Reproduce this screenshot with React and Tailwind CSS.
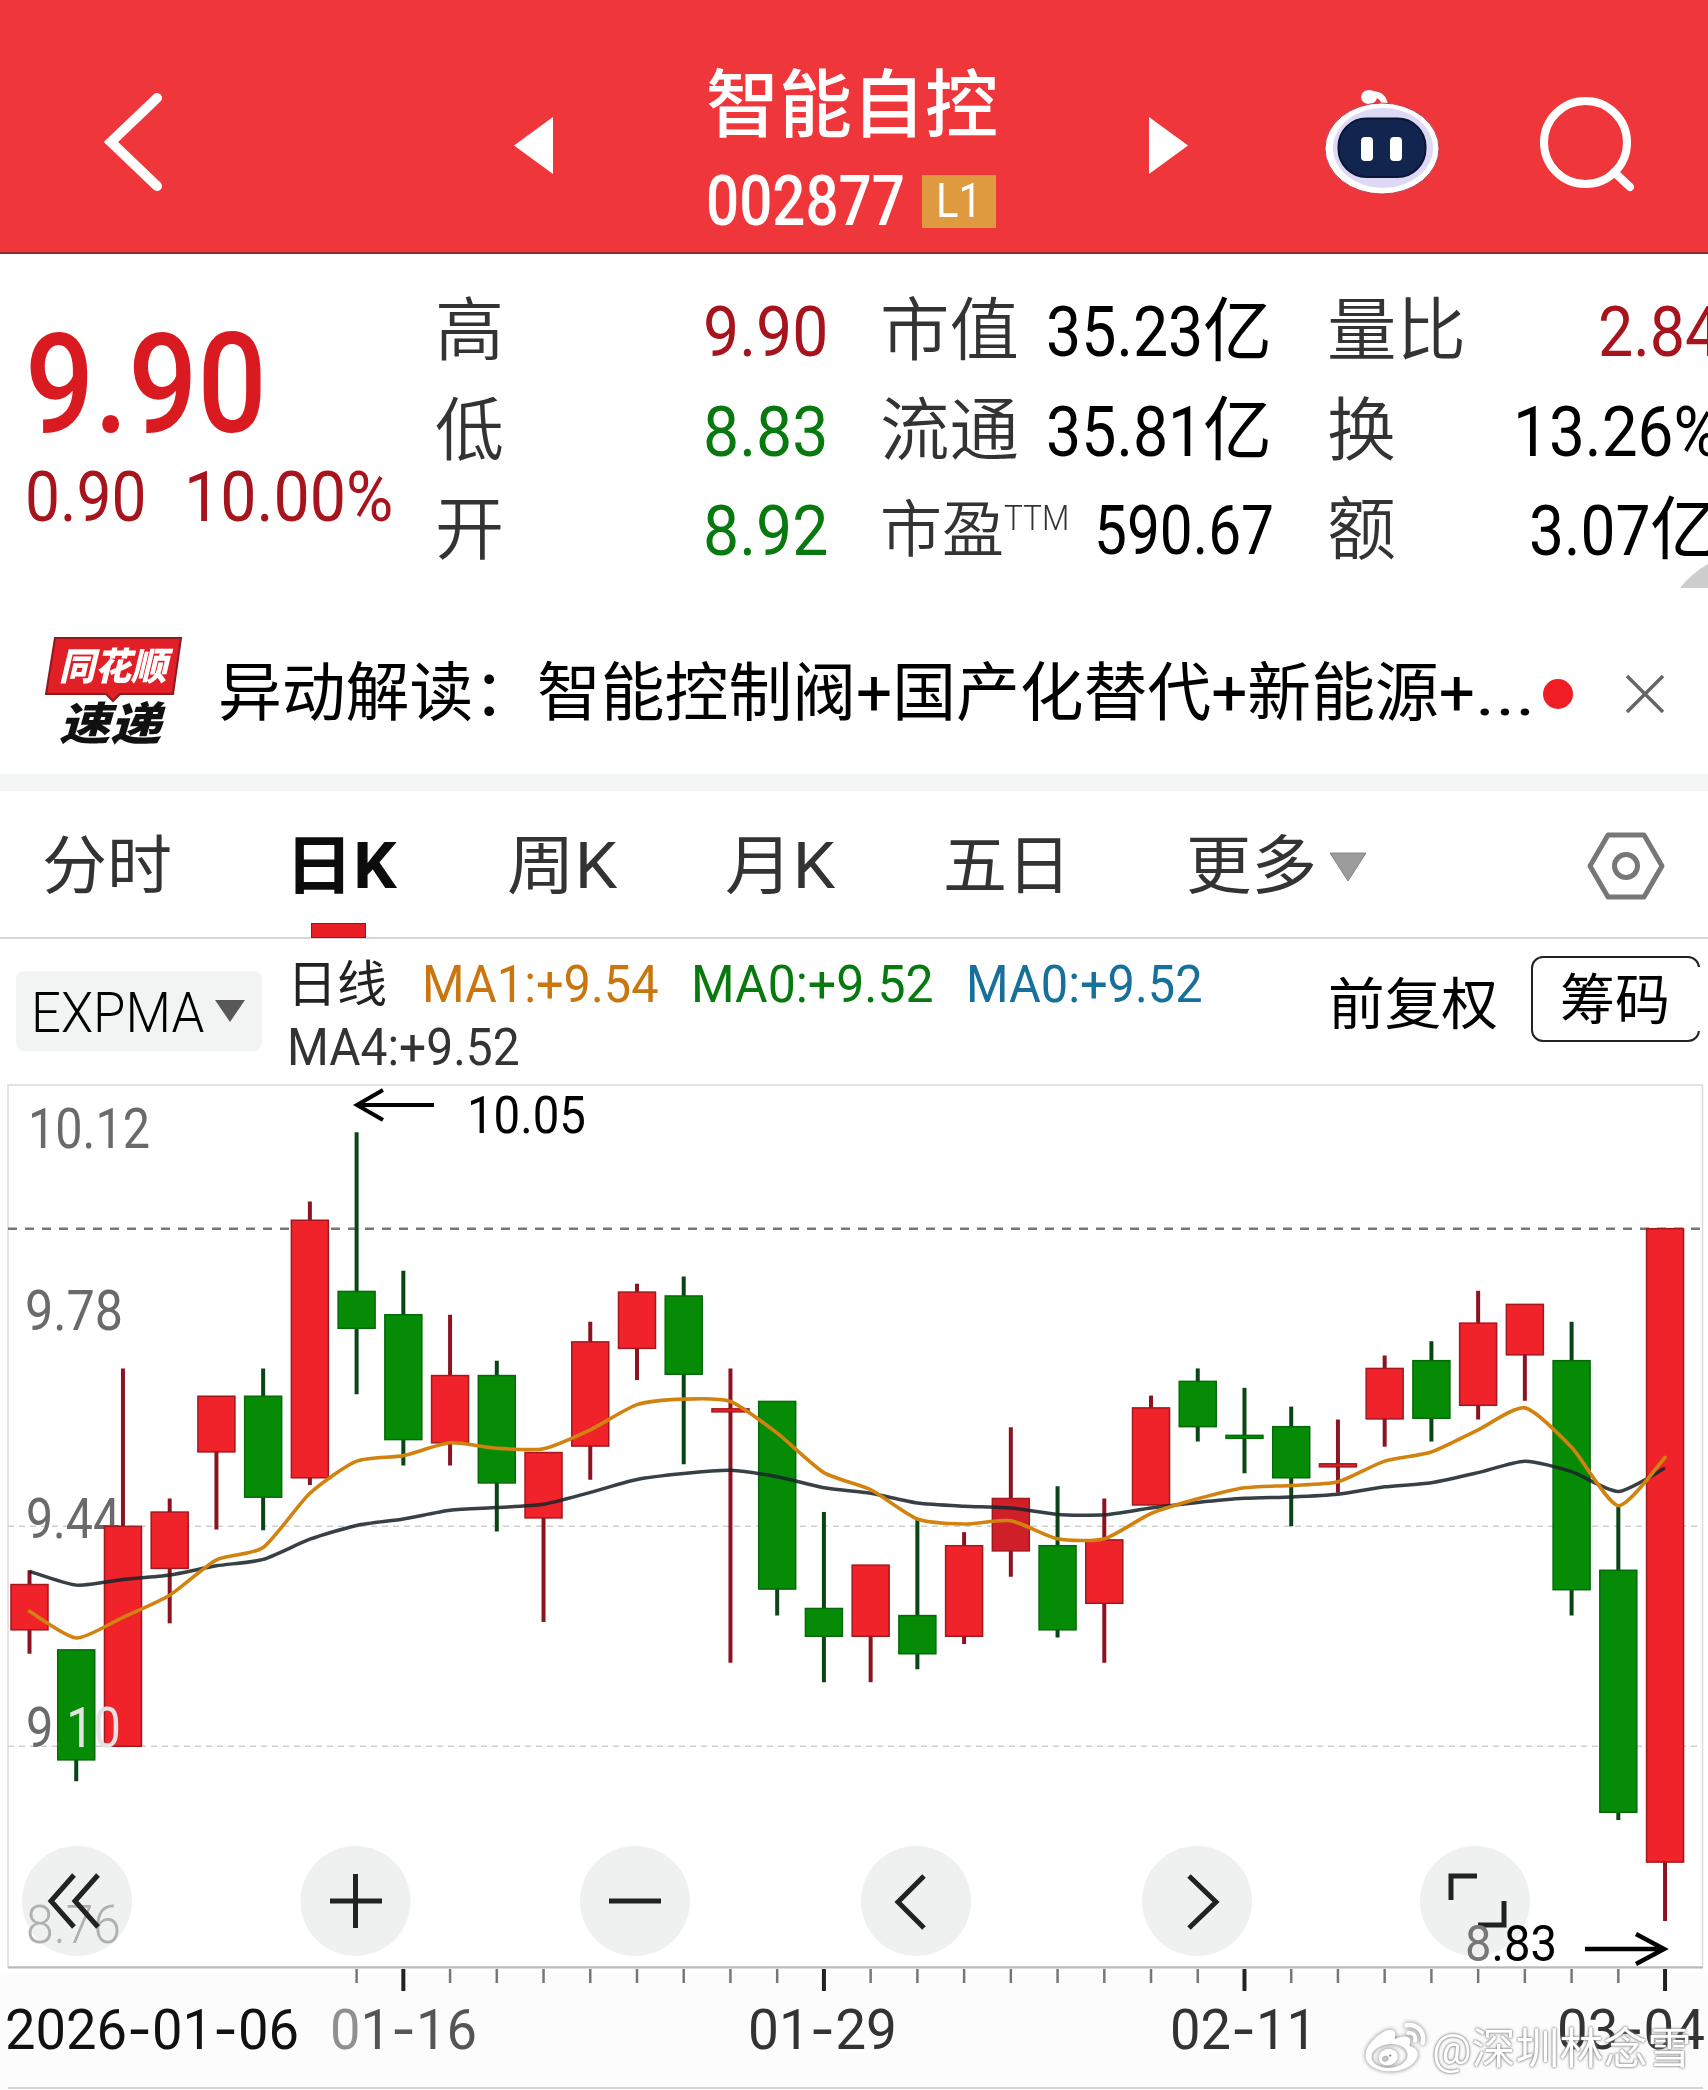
import { useLayoutEffect, useRef, useState } from "react";
import { FaWeibo } from "react-icons/fa";

/* One line of text, condensed or stretched to a set width. */
function Fit({ w, className = "", children }) {
  const ref = useRef(null);
  const [k, setK] = useState(1);
  useLayoutEffect(() => {
    setK(w / ref.current.offsetWidth);
  }, [w]);
  return (
    <span className="block shrink-0 whitespace-nowrap leading-none" style={{ width: w }}>
      <span ref={ref} className={"inline-block origin-left " + className} style={{ transform: `scaleX(${k})` }}>
        {children}
      </span>
    </span>
  );
}

function Header() {
  return (
    <header className="flex h-[254px] items-start border-b-2 border-[#8f2b2b] bg-[#ef363a] text-white">
      <svg className="ml-[100px] mt-[84px] h-[116px] w-[70px] shrink-0" viewBox="100 84 70 116" fill="none" stroke="#fff" strokeWidth="10" strokeLinecap="round">
        <path d="M157 98 L111 142 L157 186" />
      </svg>
      <svg className="ml-[344px] mt-[117px] h-[57px] w-[39px] shrink-0" viewBox="0 0 39 57" fill="#fff">
        <path d="M0 28.5 L39 0 V57 Z" />
      </svg>
      <div className="ml-[153px] mt-[69px] w-[294px] shrink-0">
        <Fit w={292} className="text-[74px] font-medium">智能自控</Fit>
        <div className="mt-[23px] flex items-center">
          <Fit w={199} className="text-[70px] font-medium">002877</Fit>
          <div className="ml-[17px] flex h-[53px] w-[74px] items-center justify-center bg-[#df9a40]">
            <Fit w={46} className="text-[48px]">L1</Fit>
          </div>
        </div>
      </div>
      <svg className="ml-[149px] mt-[117px] h-[57px] w-[39px] shrink-0" viewBox="0 0 39 57" fill="#fff">
        <path d="M39 28.5 L0 0 V57 Z" />
      </svg>
      <svg className="ml-[134px] mt-[84px] h-[114px] w-[120px] shrink-0" viewBox="1324 84 120 114">
        <ellipse cx="1371" cy="97" rx="8" ry="7" fill="#fff" />
        <path d="M1371 94 Q1386 93 1387 106" fill="none" stroke="#fff" strokeWidth="6" />
        <ellipse cx="1384" cy="148.500" rx="57" ry="45.500" fill="#fff" stroke="#b9405c" strokeWidth="1" />
        <ellipse cx="1385" cy="148" rx="50" ry="40" fill="#dcd8f5" />
        <rect x="1340.500" y="118.500" width="87" height="58.500" rx="28" fill="#12254f" stroke="#0b1637" strokeWidth="2" />
        <rect x="1363" y="137" width="12" height="24" rx="4" fill="#fff" />
        <rect x="1392" y="137" width="12" height="24" rx="4" fill="#fff" />
      </svg>
      <svg className="ml-[93px] mt-[88px] h-[108px] w-[108px] shrink-0" viewBox="1538 88 108 108" fill="none" stroke="#fff" strokeWidth="8" strokeLinecap="round">
        <circle cx="1588.500" cy="142.500" r="41.500" />
        <path d="M1617 172 L1633 187" />
      </svg>
    </header>
  );
}

const GREEN = "text-[#07790f]";
const RED = "text-[#a8141d]";

function Row({ children }) {
  return <div className="flex h-[99.5px] items-center">{children}</div>;
}

function Quote() {
  return (
    <section className="flex h-[346px] overflow-hidden">
      <div className="w-[435px] shrink-0 pl-[25px]">
        <div className="mt-[60px]">
          <Fit w={242} className="text-[140px] font-medium text-[#d91b21]">9.90</Fit>
        </div>
        <div className={"mt-[7px] flex " + RED}>
          <Fit w={121} className="text-[71px]">0.90</Fit>
          <span className="w-[38px]" />
          <Fit w={209} className="text-[71px]">10.00%</Fit>
        </div>
      </div>
      <div className="mt-[28px] w-[445px] shrink-0 text-[#333]">
        <Row>
          <Fit w={69} className="text-[69px] font-[350]">高</Fit>
          <span className="w-[199px]" />
          <Fit w={125} className={"text-[71px] " + RED}>9.90</Fit>
        </Row>
        <Row>
          <Fit w={69} className="text-[69px] font-[350]">低</Fit>
          <span className="w-[199px]" />
          <Fit w={125} className={"text-[71px] " + GREEN}>8.83</Fit>
        </Row>
        <Row>
          <Fit w={69} className="text-[69px] font-[350]">开</Fit>
          <span className="w-[199px]" />
          <Fit w={125} className={"text-[71px] " + GREEN}>8.92</Fit>
        </Row>
      </div>
      <div className="mt-[28px] w-[447px] shrink-0 text-[#333]">
        <Row>
          <Fit w={139} className="text-[69px] font-[350]">市值</Fit>
          <span className="w-[27px]" />
          <Fit w={157} className="text-[71px] text-black">35.23</Fit>
          <Fit w={69} className="text-[70px] text-black">亿</Fit>
        </Row>
        <Row>
          <Fit w={139} className="text-[69px] font-[350]">流通</Fit>
          <span className="w-[27px]" />
          <Fit w={157} className="text-[71px] text-black">35.81</Fit>
          <Fit w={69} className="text-[70px] text-black">亿</Fit>
        </Row>
        <Row>
          <Fit w={124} className="text-[62px] font-[350]">市盈</Fit>
          <div className="mb-[24px]">
            <Fit w={65} className="text-[35px] font-light">TTM</Fit>
          </div>
          <span className="w-[25px]" />
          <Fit w={180} className="text-[68px] text-black">590.67</Fit>
        </Row>
      </div>
      <div className="relative mt-[28px] w-[381px] shrink-0 overflow-hidden text-[#333]">
        <Row>
          <Fit w={139} className="text-[69px] font-[350]">量比</Fit>
          <span className="w-[132px] shrink-0" />
          <Fit w={122} className={"text-[71px] " + RED}>2.84</Fit>
        </Row>
        <Row>
          <Fit w={69} className="text-[69px] font-[350]">换</Fit>
          <span className="w-[117px] shrink-0" />
          <Fit w={207} className="text-[71px] text-black">13.26%</Fit>
        </Row>
        <Row>
          <Fit w={69} className="text-[69px] font-[350]">额</Fit>
          <span className="w-[133px] shrink-0" />
          <Fit w={121} className="text-[71px] text-black">3.07</Fit>
          <Fit w={69} className="text-[69px] text-black">亿</Fit>
        </Row>
        <svg className="absolute bottom-[12px] right-0 h-[24px] w-[28px]" viewBox="0 0 28 24" fill="#cdcdcd">
          <path d="M0 24 Q12 9 28 0 V24 Z" />
        </svg>
      </div>
    </section>
  );
}

function News() {
  return (
    <section className="flex h-[174px] items-center pt-[13px]">
      <div className="relative ml-[44px] h-[114px] w-[140px] shrink-0">
        <svg className="absolute inset-0" width="140" height="112" viewBox="0 0 140 112">
          <path d="M11 1 H137 L129 57 H76 L69 64 L62 57 H2 Z" fill="#e01f26" stroke="#8e1a1f" strokeWidth="2" />
        </svg>
        <div className="relative ml-[15px] pt-[11px] italic text-white">
          <Fit w={108} className="text-[38px] font-black">同花顺</Fit>
        </div>
        <div className="relative ml-[15px] mt-[16px] italic text-[#111]">
          <Fit w={102} className="text-[45px] font-black">速递</Fit>
        </div>
      </div>
      <span className="w-[34px] shrink-0" />
      <Fit w={1257} className="text-[64px] text-black">异动解读：智能控制阀+国产化替代+新能源+</Fit>
      <Fit w={61} className="text-[64px] text-black">...</Fit>
      <span className="ml-[7px] h-[30px] w-[30px] shrink-0 rounded-full bg-[#f01d24]" />
      <svg className="ml-[53px] h-[38px] w-[38px] shrink-0" viewBox="0 0 38 38" stroke="#666" strokeWidth="3.500">
        <path d="M1 1 L37 37 M37 1 L1 37" />
      </svg>
    </section>
  );
}

function Tabs() {
  return (
    <nav className="flex h-[148px] items-center border-b-2 border-[#d6d6d9] pt-[5px] text-[64px] text-[#333]">
      <span className="w-[42px]" />
      <Fit w={130}>分时</Fit>
      <div className="relative ml-[113px]">
        <Fit w={112} className="font-bold text-[#0c0c0c]">日K</Fit>
        <span className="absolute left-[26px] top-[88px] h-[15px] w-[55px] border border-[#8e1a1f] bg-[#e81e25]" />
      </div>
      <span className="w-[110px]" />
      <Fit w={110}>周K</Fit>
      <span className="w-[108px]" />
      <Fit w={110}>月K</Fit>
      <span className="w-[108px]" />
      <Fit w={128}>五日</Fit>
      <span className="w-[115px]" />
      <Fit w={131}>更多</Fit>
      <svg className="ml-[12px] h-[30px] w-[38px]" viewBox="0 0 38 30">
        <path d="M1 1 H37 L19 29 Z" fill="#9b9b9b" stroke="#888" />
      </svg>
      <svg className="mb-[2px] ml-[220px] h-[70px] w-[78px]" viewBox="0 0 78 70" fill="none" stroke="#777" strokeWidth="5">
        <path d="M21 4 H57 L75 35 L57 66 H21 L3 35 Z" strokeLinejoin="round" />
        <circle cx="39" cy="35" r="11.500" />
      </svg>
    </nav>
  );
}

function Indicators() {
  return (
    <section className="flex h-[145px] items-start">
      <div className="ml-[16px] mt-[32px] flex h-[80px] w-[246px] items-center rounded-lg bg-[#f2f3f3] pl-[15px] pt-[4px] text-black">
        <Fit w={173} className="text-[55px] font-light">EXPMA</Fit>
        <svg className="mb-[5px] ml-[11px] h-[22px] w-[30px]" viewBox="0 0 30 22" fill="#58585a">
          <path d="M0 0 H30 L15 22 Z" />
        </svg>
      </div>
      <div className="ml-[25px] mt-[20px] w-[1041px] text-[51px]">
        <div className="flex items-center">
          <Fit w={100} className="text-[50px] text-[#222]">日线</Fit>
          <span className="w-[35px]" />
          <Fit w={237} className="text-[#c9760f]">MA1:+9.54</Fit>
          <span className="w-[32px]" />
          <Fit w={243} className="text-[#07790f]">MA0:+9.52</Fit>
          <span className="w-[32px]" />
          <Fit w={237} className="text-[#17709c]">MA0:+9.52</Fit>
        </div>
        <div className="mt-[12px]">
          <Fit w={233} className="text-[#333]">MA4:+9.52</Fit>
        </div>
      </div>
      <div className="mt-[38px] text-black">
        <Fit w={170} className="text-[56px]">前复权</Fit>
      </div>
      <div className="relative ml-[33px] mt-[17px] flex h-[86px] w-[169px] items-center rounded-xl border-2 border-[#222] pl-[27px] pt-[2px] text-black">
        <Fit w={110} className="text-[55px]">筹码</Fit>
        <span className="absolute -right-[3px] top-[9px] h-[64px] w-[5px] bg-white" />
      </div>
    </section>
  );
}

/* high, body top, body bottom, low, direction */
const CANDLES = [
  [9.372, 9.35, 9.28, 9.243, "u"],
  [9.249, 9.249, 9.079, 9.046, "d"],
  [9.684, 9.44, 9.1, 9.1, "u"],
  [9.483, 9.462, 9.375, 9.29, "u"],
  [9.641, 9.641, 9.555, 9.435, "u"],
  [9.684, 9.641, 9.485, 9.434, "d"],
  [9.942, 9.913, 9.515, 9.504, "u"],
  [10.049, 9.803, 9.746, 9.644, "d"],
  [9.835, 9.767, 9.574, 9.534, "d"],
  [9.767, 9.673, 9.569, 9.534, "u"],
  [9.696, 9.673, 9.507, 9.432, "d"],
  [9.554, 9.554, 9.453, 9.292, "u"],
  [9.756, 9.725, 9.564, 9.512, "u"],
  [9.815, 9.802, 9.715, 9.666, "u"],
  [9.826, 9.796, 9.675, 9.536, "d"],
  [9.684, 9.62, 9.618, 9.229, "u"],
  [9.633, 9.633, 9.343, 9.302, "d"],
  [9.462, 9.313, 9.27, 9.199, "d"],
  [9.38, 9.38, 9.27, 9.199, "u"],
  [9.451, 9.302, 9.243, 9.219, "d"],
  [9.431, 9.41, 9.27, 9.258, "u"],
  [9.593, 9.483, 9.402, 9.362, "u"],
  [9.502, 9.41, 9.28, 9.268, "d"],
  [9.483, 9.419, 9.321, 9.229, "u"],
  [9.642, 9.623, 9.473, 9.473, "u"],
  [9.684, 9.664, 9.594, 9.571, "d"],
  [9.654, 9.579, 9.577, 9.522, "d"],
  [9.625, 9.594, 9.515, 9.44, "d"],
  [9.605, 9.535, 9.533, 9.492, "u"],
  [9.704, 9.684, 9.606, 9.563, "u"],
  [9.726, 9.696, 9.607, 9.571, "d"],
  [9.804, 9.754, 9.627, 9.605, "u"],
  [9.783, 9.783, 9.705, 9.634, "u"],
  [9.756, 9.696, 9.342, 9.302, "d"],
  [9.47, 9.372, 8.998, 8.986, "d"],
  [9.9, 9.9, 8.921, 8.83, "u"],
];

/* Moving averages, as depth below the chart's top. */
const FAST = [1157, 1215, 1170, 1122, 1045, 1018, 900, 830, 818, 790, 802, 803, 762, 707, 695, 700, 769, 855, 892, 956, 967, 960, 999, 999, 944, 912, 888, 883, 875, 830, 810, 762, 714, 800, 927, 822];
const SLOW = [1070, 1100, 1088, 1078, 1058, 1044, 1000, 970, 956, 937, 931, 924, 898, 870, 857, 850, 864, 888, 900, 921, 928, 932, 946, 947, 932, 920, 911, 908, 902, 886, 877, 855, 830, 853, 896, 845];

const X = (i) => 29.5 + i * 46.73;
const Y = (p) => 1526.3 - (p - 9.44) * 647;
const D = (v) => 1080 + v * 0.4592;

function curve(values) {
  const pt = (i) => {
    const j = Math.max(0, Math.min(values.length - 1, i));
    return [X(j), D(values[j])];
  };
  let d = `M${pt(0)[0]} ${pt(0)[1]}`;
  for (let i = 0; i < values.length - 1; i++) {
    const [a, b, c, e] = [pt(i - 1), pt(i), pt(i + 1), pt(i + 2)];
    const t = 9;
    d += ` C${b[0] + (c[0] - a[0]) / t} ${b[1] + (c[1] - a[1]) / t} ${c[0] - (e[0] - b[0]) / t} ${c[1] - (e[1] - b[1]) / t} ${c[0]} ${c[1]}`;
  }
  return d;
}

function Label({ x, y, w, size = 56, fill = "#6a6a6a", light = false, children }) {
  return (
    <text x={x} y={y} fontSize={size} fill={fill} textLength={w} lengthAdjust="spacingAndGlyphs" fontWeight={light ? 300 : 400}>
      {children}
    </text>
  );
}

const Dash = () => <tspan fontFamily="Inter">-</tspan>;

const BUTTONS = [
  [77, "M74 1875 L51 1901 L74 1927 M98 1875 L75 1901 L98 1927"],
  [355.5, "M330 1901 H382 M355.500 1874 V1928"],
  [635, "M609 1901 H661"],
  [916, "M924 1876 L898 1902 L924 1928"],
  [1197, "M1189 1876 L1216 1902 L1189 1928"],
  [1475, "M1451 1900 V1876 H1477 M1504 1901 V1925 H1478"],
];

function Chart() {
  return (
    <section className="relative h-[1006px] bg-gradient-to-b from-white from-88% to-[#fbfcfb] to-89%">
      <svg className="block" width="1708" height="1006" viewBox="0 1084 1708 1006">
        <rect x="8" y="1085" width="1694.500" height="882" fill="#fff" stroke="#dadada" strokeWidth="1.500" />
        <path d="M8 1967.500 H1703" stroke="#b9b9b9" strokeWidth="2" />
        <path d="M8 1228.800 H1700" stroke="#777" strokeWidth="2.500" strokeDasharray="9 8" />
        <path d="M8 1526.300 H1700 M8 1746.300 H1700" stroke="#cfcfcf" strokeWidth="1.500" strokeDasharray="6 5" />
        <Label x={26} y={1538} w={94}>9.44</Label>
        {CANDLES.map(([h, t, b, l, dir], i) => {
          const up = dir === "u";
          const top = Y(t);
          const doji = t - b < 0.003;
          return (
            <g key={i}>
              <path d={`M${X(i)} ${Y(h)} V${Y(l)}`} stroke={up ? "#8c1420" : "#0a4514"} strokeWidth="4" />
              <rect
                x={X(i) - 18.5}
                y={doji ? top - 1 : top}
                width="37"
                height={doji ? 3 : Y(b) - top}
                fill={i === 21 ? "#cf202a" : up ? "#ef2329" : "#058b06"}
                stroke={up ? "#a5161d" : "#066a0a"}
                strokeWidth="1.500"
              />
            </g>
          );
        })}
        <path d={curve(SLOW)} fill="none" stroke="#1b262b" strokeWidth="3.500" opacity="0.88" strokeLinejoin="round" />
        <path d={curve(FAST)} fill="none" stroke="#d1820f" strokeWidth="3.600" strokeLinejoin="round" strokeLinecap="round" />
        <Label x={28} y={1148} w={122}>10.12</Label>
        <Label x={25} y={1330} w={98}>9.78</Label>
        <Label x={26} y={1747} w={95}>
          9<tspan fill="#058b06">.</tspan>
          <tspan fill="#e3e3e3">10</tspan>
        </Label>
        <Label x={467} y={1133} w={119} size={51} fill="#000">10.05</Label>
        <path d="M434 1105 H357 M383 1090 L357 1105 L383 1120" fill="none" stroke="#000" strokeWidth="4" />
        {BUTTONS.map(([cx, d], i) => (
          <g key={i}>
            <circle cx={cx} cy="1901" r="55" fill="#eff0f0" />
            {i === 0 && <Label x={26} y={1943} w={95} size={54} fill="#b0b0b0" light>8.76</Label>}
            <path d={d} fill="none" stroke="#222" strokeWidth="5" />
          </g>
        ))}
        <Label x={1465} y={1961} w={92} size={50} fill="#000">
          <tspan fill="#777">8</tspan>.83
        </Label>
        <path d="M1585 1949 H1663 M1636 1934 L1664 1949 L1636 1964" fill="none" stroke="#000" strokeWidth="4.500" />
        {CANDLES.map((_, i) => {
          const major = i === 8 || i === 17 || i === 26 || i === 35;
          if (i < 7) return null;
          return <path key={i} d={`M${X(i)} 1969 V${major ? 1991 : 1983}`} stroke={major ? "#222" : "#777"} strokeWidth={major ? 4 : 2.5} />;
        })}
        <Label x={5} y={2049} w={294} fill="#111">2026<Dash />01<Dash />06</Label>
        <Label x={330} y={2049} w={147} fill="#555"><tspan fill="#909090">0</tspan>1<Dash />16</Label>
        <Label x={748} y={2049} w={149} fill="#333">01<Dash />29</Label>
        <Label x={1170} y={2049} w={147} fill="#333">02<Dash />11</Label>
        <Label x={1557} y={2049} w={148} fill="#333">03<Dash />04</Label>
        <path d="M8 2088 H1703" stroke="#d5d5d5" strokeWidth="2" />
      </svg>
      <div className="absolute bottom-[11px] left-[1365px] flex items-center gap-[6px] text-white">
        <FaWeibo className="h-[60px] w-[61px] drop-shadow-[0_0_2px_#777]" />
        <Fit w={260} className="text-[43px] [text-shadow:0_0_3px_#777,0_0_2px_#888]">@深圳林念雪</Fit>
      </div>
    </section>
  );
}

export default function App() {
  return (
    <main lang="zh-CN" className="h-[2090px] w-[1708px] overflow-hidden bg-white font-[Roboto,'Noto_Sans_CJK_SC',sans-serif]">
      <Header />
      <Quote />
      <News />
      <div className="h-[17px] bg-[#f4f6f5]" />
      <Tabs />
      <Indicators />
      <Chart />
    </main>
  );
}
